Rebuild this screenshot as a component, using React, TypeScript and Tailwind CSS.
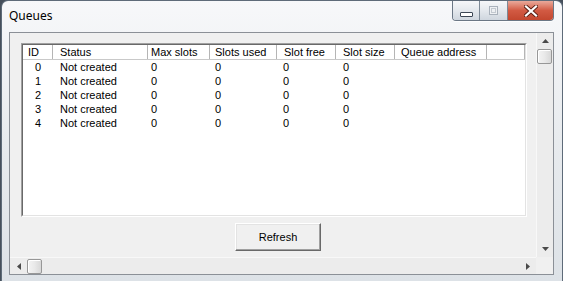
import { ReactNode } from "react";

type Column = {
  label: string;
  width: string;
  pad: string;
};

const columns: Column[] = [
  { label: "ID", width: "w-[30px]", pad: "pl-[5px]" },
  { label: "Status", width: "w-[95px]", pad: "pl-[7px]" },
  { label: "Max slots", width: "w-[62px]", pad: "pl-[3px]" },
  { label: "Slots used", width: "w-[67px]", pad: "pl-[5px]" },
  { label: "Slot free", width: "w-[59px]", pad: "pl-[7px]" },
  { label: "Slot size", width: "w-[59px]", pad: "pl-[7px]" },
  { label: "Queue address", width: "w-[92px]", pad: "pl-[6px]" },
];

const queues = [0, 1, 2, 3, 4].map((id) => ({
  id,
  status: "Not created",
  maxSlots: 0,
  slotsUsed: 0,
  slotFree: 0,
  slotSize: 0,
  address: "",
}));

function CaptionButtons() {
  return (
    <div className="flex h-[20px] overflow-hidden rounded-b-[4px] border border-t-0 border-[#6b7785] shadow-[0_1px_0_rgba(255,255,255,0.8)]">
      <div className="flex w-[27px] items-end justify-center border-r border-[#7d8996] bg-gradient-to-b from-[#f6f7f9] via-[#e4e8ed] to-[#cfd6de] pb-[3px]">
        <div className="h-[5px] w-[13px] rounded-[1px] border border-[#3c4654] bg-white" />
      </div>
      <div className="flex w-[28px] items-center justify-center border-r border-[#7d8996] bg-gradient-to-b from-[#f6f7f9] via-[#e4e8ed] to-[#cfd6de]">
        <div className="h-[9px] w-[9px] border border-[#a9b1bb] bg-[#eef0f3]">
          <div className="m-[1px] h-[5px] border border-[#c3c9d0]" />
        </div>
      </div>
      <div className="flex w-[45px] items-center justify-center bg-gradient-to-b from-[#e9a99b] via-[#d25a43] to-[#c3472f]">
        <svg width="14" height="12" viewBox="0 0 14 12">
          <path d="M2 1.5 L12 10.5 M12 1.5 L2 10.5" stroke="#5a1f14" strokeWidth="4" strokeLinecap="square" />
          <path d="M2 1.5 L12 10.5 M12 1.5 L2 10.5" stroke="#ffffff" strokeWidth="2.2" strokeLinecap="square" />
        </svg>
      </div>
    </div>
  );
}

function Arrow({ dir }: { dir: "up" | "down" | "left" | "right" }) {
  const points = {
    up: "0,4 3.5,0 7,4",
    down: "0,0 3.5,4 7,0",
    left: "4,0 0,3.5 4,7",
    right: "0,0 4,3.5 0,7",
  }[dir];
  const vertical = dir === "up" || dir === "down";
  return (
    <svg width={vertical ? 7 : 4} height={vertical ? 4 : 7} viewBox={vertical ? "0 0 7 4" : "0 0 4 7"}>
      <polygon points={points} fill="#4a4a4a" />
    </svg>
  );
}

function Thumb({ className }: { className: string }) {
  return (
    <div
      className={`rounded-[2px] border border-[#979797] bg-gradient-to-r from-[#f4f4f4] via-[#e9e9e9] to-[#d8d8d8] shadow-[inset_1px_1px_0_#ffffff] ${className}`}
    />
  );
}

function Cell({ className, children }: { className: string; children?: ReactNode }) {
  return <div className={`shrink-0 truncate ${className}`}>{children}</div>;
}

export default function App() {
  return (
    <div className="h-[281px] w-[563px] overflow-hidden bg-[#46505c] font-['Liberation_Sans',Arial,sans-serif] text-[11px] text-black">
      <div className="ml-[1px] flex h-full flex-col rounded-t-[7px] border border-b-0 border-[#5e6b79] bg-gradient-to-b from-[#f7f8fa] via-[#e8ebee] to-[#dde2e7]">
        {/* title bar */}
        <div className="flex h-[31px] shrink-0 items-start justify-between pl-[7px] pr-[8px]">
          <span className="pt-[7px] font-['Noto_Sans','Open_Sans',sans-serif] text-[12px] leading-[16px] text-black">
            Queues
          </span>
          <CaptionButtons />
        </div>

        {/* client area */}
        <div className="ml-[7px] flex h-[243px] w-[545px] flex-col border border-[#8b9097] bg-[#f0f0f0]">
          <div className="flex h-[224px]">
            <div className="w-[526px]">
              <div className="ml-[11px] mt-[10px] flex h-[174px] w-[506px] flex-col border border-b-white border-l-[#a0a0a0] border-r-white border-t-[#a0a0a0]">
                <div className="flex h-full flex-col border border-b-[#e3e3e3] border-l-[#696969] border-r-[#e3e3e3] border-t-[#696969] bg-white">
                  <div className="flex h-[15px] shrink-0 border-b border-[#c9c9c9] leading-[14px]">
                    {columns.map((col) => (
                      <Cell key={col.label} className={`${col.width} ${col.pad} border-r border-[#b5b5b5]`}>
                        {col.label}
                      </Cell>
                    ))}
                    <div className="flex-1 border-r border-[#b5b5b5]" />
                  </div>
                  {queues.map((q) => (
                    <div key={q.id} className="flex h-[14px] leading-[14px]">
                      <Cell className="w-[30px] pl-[12px]">{q.id}</Cell>
                      <Cell className="w-[95px] pl-[7px]">{q.status}</Cell>
                      <Cell className="w-[62px] pl-[3px]">{q.maxSlots}</Cell>
                      <Cell className="w-[67px] pl-[5px]">{q.slotsUsed}</Cell>
                      <Cell className="w-[59px] pl-[6px]">{q.slotFree}</Cell>
                      <Cell className="w-[59px] pl-[7px]">{q.slotSize}</Cell>
                      <Cell className="w-[92px] pl-[6px]">{q.address}</Cell>
                    </div>
                  ))}
                </div>
              </div>
              <button className="ml-[225px] mt-[6px] h-[28px] w-[86px] border border-b-[#696969] border-l-white border-r-[#696969] border-t-white bg-[#f0f0f0] text-[11px] shadow-[inset_-1px_-1px_0_#a0a0a0,inset_1px_1px_0_#e3e3e3]">
                Refresh
              </button>
            </div>

            {/* vertical scrollbar */}
            <div className="flex w-[17px] flex-col border-l border-[#f8f8f8] bg-[#ececec]">
              <div className="flex h-[16px] items-center justify-center">
                <Arrow dir="up" />
              </div>
              <Thumb className="h-[15px] w-[15px]" />
              <div className="flex-1" />
              <div className="flex h-[17px] items-center justify-center">
                <Arrow dir="down" />
              </div>
            </div>
          </div>

          {/* horizontal scrollbar */}
          <div className="flex h-[17px]">
            <div className="flex w-[526px] items-center border-t border-[#f8f8f8] bg-[#ececec]">
              <div className="flex h-full w-[17px] items-center justify-center">
                <Arrow dir="left" />
              </div>
              <Thumb className="h-[15px] w-[15px]" />
              <div className="flex-1" />
              <div className="flex h-full w-[17px] items-center justify-center">
                <Arrow dir="right" />
              </div>
            </div>
            <div className="w-[17px] bg-[#f0f0f0]" />
          </div>
        </div>
      </div>
    </div>
  );
}
